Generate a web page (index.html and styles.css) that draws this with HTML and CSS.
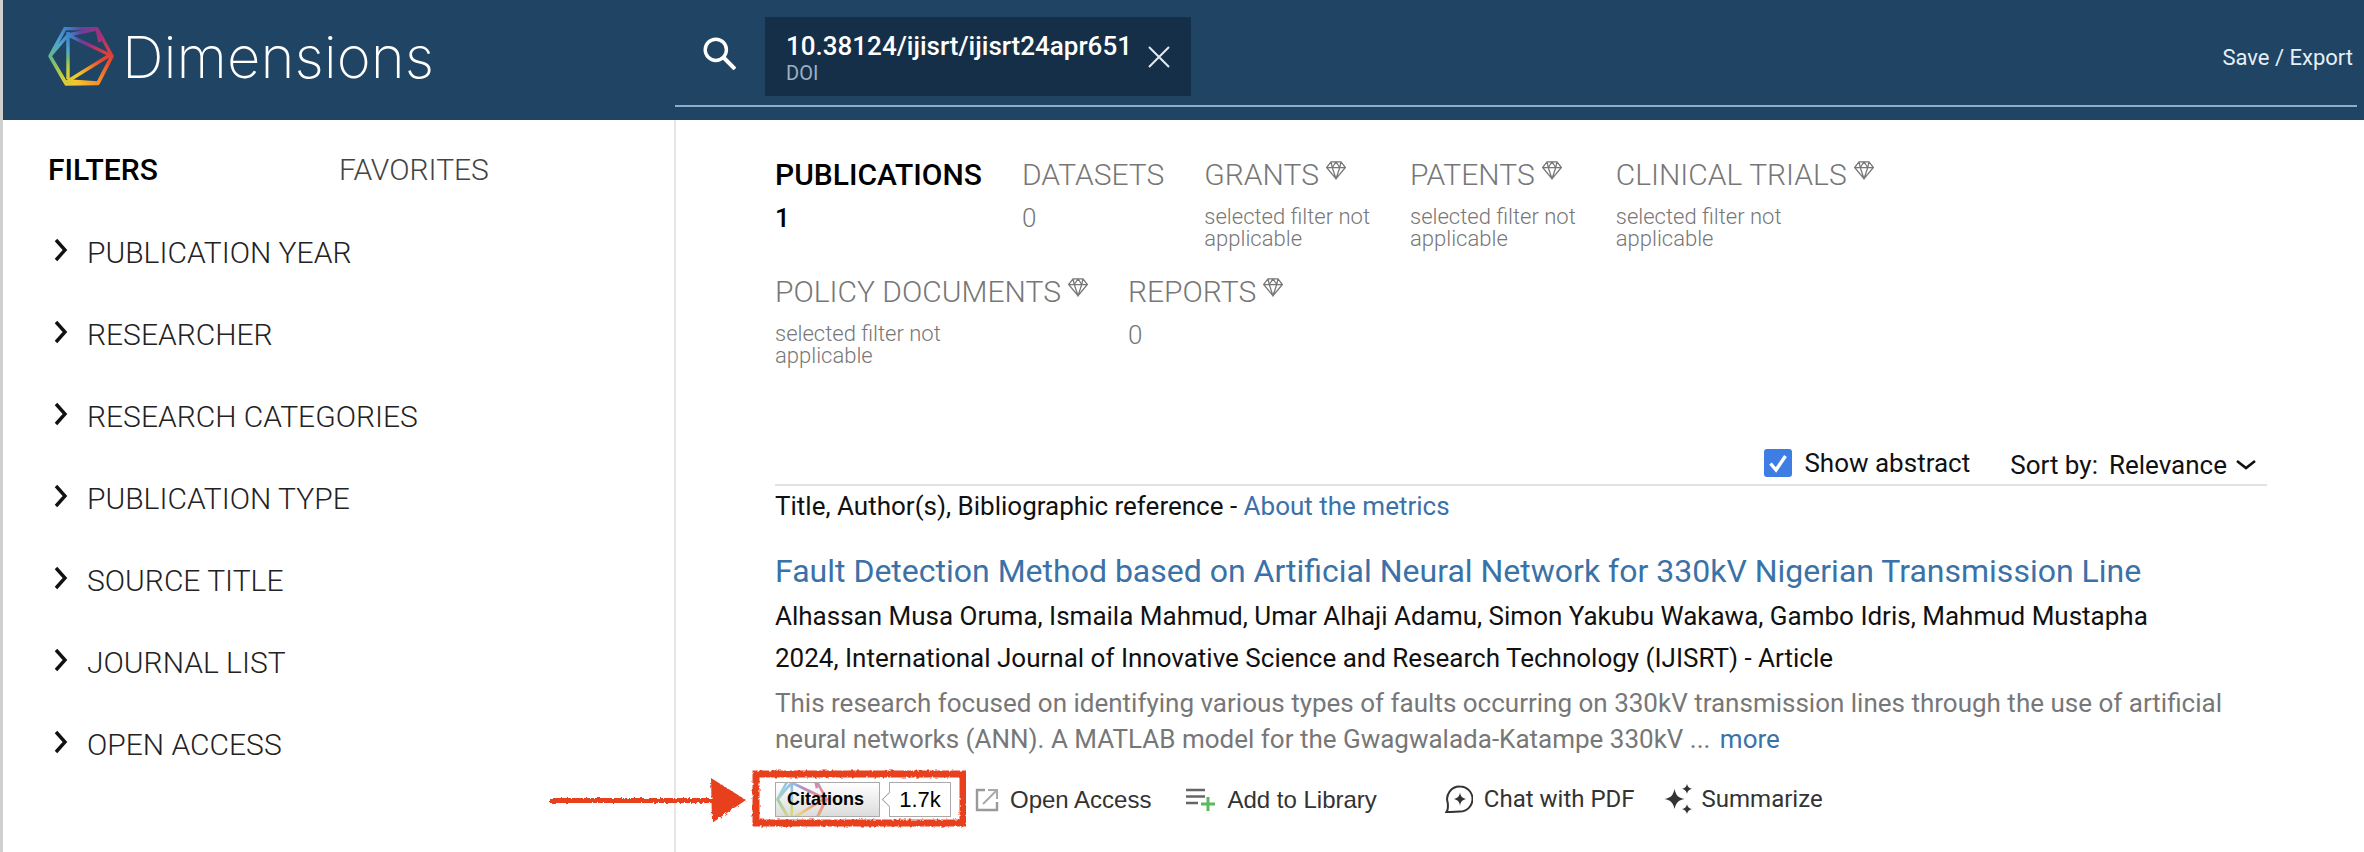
FILE: index.html
```html
<!DOCTYPE html>
<html lang="en">
<head>
    <meta charset="UTF-8">
    <title>Dimensions</title>
    <link rel="stylesheet" href="styles.css">
</head>
<body>
<svg class="defs" width="0" height="0">
    <defs>
        <mask id="logo-lines" maskUnits="userSpaceOnUse" x="0" y="0" width="66" height="60">
            <g fill="none" stroke="#fff" stroke-width="3.400" stroke-linejoin="round">
                <path d="M17 1.500L49 1.500L64 29L50 56.500L18 57L2 29Z"/>
                <path d="M49 2L20 8L62 28L20 54L50 56M20 5V52M2 29L20 8M2 29L18 56M49 2L52 15M64 29L50 56"/>
            </g>
        </mask>
    </defs>
</svg>

<header class="top-bar">
    <div class="brand">
        <svg class="logo" viewBox="0 0 66 60" width="66" height="60">
            <foreignObject x="0" y="0" width="66" height="60" mask="url(#logo-lines)">
                <div class="logo-fill"></div>
            </foreignObject>
        </svg>
        <span class="brand-name">Dimensions</span>
    </div>
    <div class="search-bar">
        <svg class="search-icon" viewBox="0 0 32 32" width="34" height="34">
            <circle cx="13" cy="13" r="10" fill="none" stroke="#fff" stroke-width="3.200"/>
            <path d="M20.500 20.500L31 31" stroke="#fff" stroke-width="3.800"/>
        </svg>
        <div class="search-chip">
            <div class="chip-text">
                <div class="chip-value">10.38124/ijisrt/ijisrt24apr651</div>
                <div class="chip-type">DOI</div>
            </div>
            <svg class="chip-close" viewBox="0 0 22 22" width="22" height="22">
                <path d="M1 1L21 21M21 1L1 21" stroke="#e4eaef" stroke-width="2"/>
            </svg>
        </div>
        <a class="save-link">Save / Export</a>
    </div>
</header>

<div class="page">
    <aside class="sidebar">
        <div class="side-tabs">
            <span class="side-tab active">FILTERS</span>
            <span class="side-tab">FAVORITES</span>
        </div>
        <ul class="filter-list">
            <li><svg class="chev" viewBox="0 0 14 24" width="14" height="24"><path d="M2 2L11 12L2 22"/></svg>PUBLICATION YEAR</li>
            <li><svg class="chev" viewBox="0 0 14 24" width="14" height="24"><path d="M2 2L11 12L2 22"/></svg>RESEARCHER</li>
            <li><svg class="chev" viewBox="0 0 14 24" width="14" height="24"><path d="M2 2L11 12L2 22"/></svg>RESEARCH CATEGORIES</li>
            <li><svg class="chev" viewBox="0 0 14 24" width="14" height="24"><path d="M2 2L11 12L2 22"/></svg>PUBLICATION TYPE</li>
            <li><svg class="chev" viewBox="0 0 14 24" width="14" height="24"><path d="M2 2L11 12L2 22"/></svg>SOURCE TITLE</li>
            <li><svg class="chev" viewBox="0 0 14 24" width="14" height="24"><path d="M2 2L11 12L2 22"/></svg>JOURNAL LIST</li>
            <li><svg class="chev" viewBox="0 0 14 24" width="14" height="24"><path d="M2 2L11 12L2 22"/></svg>OPEN ACCESS</li>
        </ul>
    </aside>

    <main class="content">
        <div class="tabs">
            <div class="tab active">
                <div class="tab-title">PUBLICATIONS</div>
                <div class="tab-count">1</div>
            </div>
            <div class="tab">
                <div class="tab-title">DATASETS</div>
                <div class="tab-count">0</div>
            </div>
            <div class="tab">
                <div class="tab-title">GRANTS<svg class="gem" viewBox="0 0 16 16" width="20" height="20"><path d="M4 1.500H12L15.500 6L8 15L.5 6ZM.5 6H15.500M5 6L8 15L11 6L8 1.500L5 6M4 1.500L5 6M12 1.500L11 6"/></svg></div>
                <div class="tab-note">selected filter not<br>applicable</div>
            </div>
            <div class="tab">
                <div class="tab-title">PATENTS<svg class="gem" viewBox="0 0 16 16" width="20" height="20"><path d="M4 1.500H12L15.500 6L8 15L.5 6ZM.5 6H15.500M5 6L8 15L11 6L8 1.500L5 6M4 1.500L5 6M12 1.500L11 6"/></svg></div>
                <div class="tab-note">selected filter not<br>applicable</div>
            </div>
            <div class="tab">
                <div class="tab-title">CLINICAL TRIALS<svg class="gem" viewBox="0 0 16 16" width="20" height="20"><path d="M4 1.500H12L15.500 6L8 15L.5 6ZM.5 6H15.500M5 6L8 15L11 6L8 1.500L5 6M4 1.500L5 6M12 1.500L11 6"/></svg></div>
                <div class="tab-note">selected filter not<br>applicable</div>
            </div>
            <div class="tab">
                <div class="tab-title">POLICY DOCUMENTS<svg class="gem" viewBox="0 0 16 16" width="20" height="20"><path d="M4 1.500H12L15.500 6L8 15L.5 6ZM.5 6H15.500M5 6L8 15L11 6L8 1.500L5 6M4 1.500L5 6M12 1.500L11 6"/></svg></div>
                <div class="tab-note">selected filter not<br>applicable</div>
            </div>
            <div class="tab">
                <div class="tab-title">REPORTS<svg class="gem" viewBox="0 0 16 16" width="20" height="20"><path d="M4 1.500H12L15.500 6L8 15L.5 6ZM.5 6H15.500M5 6L8 15L11 6L8 1.500L5 6M4 1.500L5 6M12 1.500L11 6"/></svg></div>
                <div class="tab-count">0</div>
            </div>
        </div>

        <div class="toolbar">
            <label class="show-abstract">
                <svg class="check" viewBox="0 0 28 28" width="28" height="28">
                    <rect width="28" height="28" rx="3" fill="#3d7de4"/>
                    <path d="M6.500 14.500L12 21L21.500 7" fill="none" stroke="#fff" stroke-width="3.400"/>
                </svg>
                Show abstract
            </label>
            <div class="sort">
                <span>Sort by:</span>
                <span class="sort-value">Relevance</span>
                <svg viewBox="0 0 22 12" width="22" height="12"><path d="M2 2L11 9L20 2" fill="none" stroke="#111" stroke-width="2.600"/></svg>
            </div>
        </div>

        <p class="legend">Title, Author(s), Bibliographic reference - <a>About the metrics</a></p>

        <article class="result">
            <h2 class="result-title">Fault Detection Method based on Artificial Neural Network for 330kV Nigerian Transmission Line</h2>
            <p class="result-line">Alhassan Musa Oruma, Ismaila Mahmud, Umar Alhaji Adamu, Simon Yakubu Wakawa, Gambo Idris, Mahmud Mustapha</p>
            <p class="result-line">2024, International Journal of Innovative Science and Research Technology (IJISRT) - Article</p>
            <p class="result-abstract">This research focused on identifying various types of faults occurring on 330kV transmission lines through the use of artificial<br>neural networks (ANN). A MATLAB model for the Gwagwalada-Katampe 330kV ... <a>more</a></p>

            <div class="actions">
                <div class="badge">
                    <div class="badge-label">
                        <svg class="badge-logo" viewBox="0 0 66 60" width="52" height="48">
                            <foreignObject x="0" y="0" width="66" height="60" mask="url(#logo-lines)">
                                <div class="logo-fill"></div>
                            </foreignObject>
                        </svg>
                        <span>Citations</span>
                    </div>
                    <div class="badge-count">1.7k</div>

                    <svg class="scribble" viewBox="0 0 420 64" width="420" height="64">
                        <defs>
                            <filter id="rough" x="-5%" y="-20%" width="110%" height="140%">
                                <feTurbulence type="fractalNoise" baseFrequency="0.35" numOctaves="2" seed="4"/>
                                <feDisplacementMap in="SourceGraphic" scale="3.500"/>
                            </filter>
                        </defs>
                        <g filter="url(#rough)">
                            <rect x="210" y="5" width="207" height="49" fill="none" stroke="#e8411f" stroke-width="7"/>
                            <path d="M4 29H168V34H4Z" fill="#e8411f"/>
                            <path d="M165 9L200 31L166 54Z" fill="#e8411f"/>
                        </g>
                    </svg>
                </div>

                <a class="action action-oa">
                    <svg viewBox="0 0 24 24" width="24" height="24" fill="none" stroke="#999" stroke-width="2.400">
                        <path d="M10 2H2V22H22V14"/>
                        <path d="M8 16L22 2M13 2H22V11" stroke="#aaa" stroke-width="2"/>
                    </svg>
                    Open Access
                </a>
                <a class="action action-lib">
                    <svg viewBox="0 0 30 26" width="30" height="26">
                        <path d="M0 3H19M0 9.500H19M0 16H12" stroke="#666" stroke-width="2.600"/>
                        <path d="M22 10V24M15 17H29" stroke="#5cb85c" stroke-width="3"/>
                    </svg>
                    Add to Library
                </a>
                <a class="action action-chat">
                    <svg viewBox="0 0 28 28" width="28" height="28">
                        <path d="M15 1.500A12.500 12.500 0 1 1 15 26.500C12 26.500 7 27 1.500 27C3.500 25 3 23 2.800 18A12.500 12.500 0 0 1 15 1.500Z" fill="none" stroke="#333" stroke-width="2"/>
                        <path d="M15 7.500C15.800 11.500 17 12.800 21 14C17 15.200 15.800 16.500 15 20.500C14.200 16.500 13 15.200 9 14C13 12.800 14.200 11.500 15 7.500Z" fill="#333"/>
                    </svg>
                    Chat with PDF
                </a>
                <a class="action action-sum">
                    <svg viewBox="0 0 30 30" width="30" height="30" fill="#333">
                        <path d="M10.500 5C12 11.500 14 13.500 20.500 15C14 16.500 12 18.500 10.500 25C9 18.500 7 16.500 .5 15C7 13.500 9 11.500 10.500 5Z"/>
                        <path d="M23 0C23.800 3 25 4 28 4.800C25 5.600 23.800 6.800 23 9.800C22.200 6.800 21 5.600 18 4.800C21 4 22.200 3 23 0Z"/>
                        <path d="M23 20.200C23.800 23.200 25 24.200 28 25C25 25.800 23.800 27 23 30C22.200 27 21 25.800 18 25C21 24.200 22.200 23.200 23 20.200Z"/>
                    </svg>
                    Summarize
                </a>
            </div>
        </article>
    </main>
</div>
</body>
</html>
```

FILE: styles.css
```css
* {
    margin: 0;
    padding: 0;
    box-sizing: border-box;
}
html, body {
    height: 852px;
    overflow: hidden;
}
body {
    background: #fff;
    border-left: 3px solid #cfcfcf;
    font-family: Roboto, "Liberation Sans", sans-serif;
    color: #111;
}
a {
    color: inherit;
    text-decoration: none;
}
.defs {
    position: absolute;
}

/* top bar */
.top-bar {
    height: 120px;
    background: #204464;
    display: flex;
    color: #fff;
}
.brand {
    width: 672px;
    padding: 27px 0 0 45px;
    display: flex;
    align-items: flex-start;
}
.logo {
    display: block;
}
.logo-fill {
    width: 66px;
    height: 60px;
    background: conic-gradient(from 0deg at 50% 50%, #6a3f9c 0deg, #a0307e 40deg, #e8452c 95deg, #f08a2a 140deg, #f5c52e 190deg, #c9cf3a 225deg, #6dbb78 265deg, #4fa6cf 300deg, #3f7fc8 335deg, #6a3f9c 360deg);
}
.brand-name {
    font-family: Inter, sans-serif;
    font-weight: 200;
    font-size: 58px;
    line-height: 60px;
    margin-left: 8px;
}
.search-bar {
    flex: 1;
    height: 107px;
    margin-right: 7px;
    border-bottom: 2px solid #8fadc4;
    display: flex;
    align-items: flex-start;
    padding-left: 27px;
}
.search-icon {
    margin-top: 36px;
}
.search-chip {
    width: 426px;
    height: 79px;
    margin: 17px 0 0 29px;
    padding: 0 21px;
    background: #152f48;
    display: flex;
    align-items: center;
    justify-content: space-between;
}
.chip-value {
    font-size: 26px;
    line-height: 30px;
    font-weight: 500;
}
.chip-type {
    font-size: 20px;
    line-height: 20px;
    color: #9fb0bf;
    margin-top: 2px;
}
.save-link {
    margin: 46px 4px 0 auto;
    font-size: 22px;
    line-height: 24px;
    color: #e6eff6;
}

/* left column */
.page {
    display: flex;
    height: 732px;
}
.sidebar {
    width: 673px;
    flex: none;
    border-right: 2px solid #e6e6e6;
    padding: 30px 0 0 45px;
}
.side-tabs {
    display: flex;
    height: 40px;
    line-height: 40px;
    font-size: 30px;
    margin-bottom: 21px;
}
.side-tab {
    width: 291px;
    font-weight: 300;
    color: #444;
}
.side-tab.active {
    font-weight: 500;
    color: #000;
}
.filter-list {
    list-style-type: none;
}
.filter-list li {
    height: 82px;
    display: flex;
    align-items: center;
    font-size: 30px;
    font-weight: 300;
    color: #222;
}
.chev {
    margin: -4px 19px 0 6px;
    fill: none;
    stroke: #111;
    stroke-width: 3.400;
}

/* main column */
.content {
    width: 1591px;
    padding: 35px 0 0 99px;
}
.tabs {
    width: 1200px;
    height: 285px;
    display: flex;
    flex-wrap: wrap;
    align-content: flex-start;
    gap: 22px 40px;
}
.tab-title {
    display: flex;
    font-size: 30px;
    line-height: 40px;
    font-weight: 300;
    color: #777;
    white-space: nowrap;
}
.tab.active .tab-title {
    font-weight: 500;
    color: #000;
}
.tab-count {
    margin-top: 8px;
    font-size: 26px;
    line-height: 30px;
    font-weight: 300;
    color: #777;
}
.tab.active .tab-count {
    font-weight: 500;
    color: #000;
}
.tab-note {
    margin-top: 11px;
    font-size: 22px;
    line-height: 22px;
    font-weight: 300;
    color: #777;
}
.gem {
    margin: 5px 0 0 7px;
    fill: none;
    stroke: #777;
    stroke-width: 1;
}
.toolbar {
    width: 1492px;
    height: 46px;
    padding-right: 10px;
    border-bottom: 2px solid #e2e2e2;
    display: flex;
    justify-content: flex-end;
    align-items: flex-start;
    font-size: 26px;
    line-height: 32px;
}
.show-abstract {
    display: flex;
    align-items: center;
    gap: 12px;
    margin: 7px 40px 0 0;
}
.sort {
    display: flex;
    align-items: center;
    gap: 11px;
    margin-top: 9px;
}
.sort svg {
    margin-left: -3px;
}
.legend {
    margin-top: 3px;
    font-size: 26px;
    line-height: 34px;
}
.legend a, .result-abstract a {
    color: #3a72a8;
}
.result {
    margin-top: 28px;
}
.result-title {
    font-size: 32px;
    line-height: 40px;
    font-weight: 400;
    color: #3a72a8;
}
.result-line {
    margin-top: 8px;
    font-size: 26px;
    line-height: 34px;
    color: #111;
}
.result-abstract {
    margin-top: 10px;
    font-size: 26px;
    line-height: 36px;
    color: #777;
}
.result-abstract a {
    margin-left: 3px;
}

/* actions row */
.actions {
    display: flex;
    align-items: center;
    margin-top: 20px;
    height: 44px;
    font-size: 24px;
    color: #333;
}
.action {
    display: flex;
    align-items: center;
    gap: 11px;
}
.badge {
    position: relative;
    display: flex;
    width: 200px;
    height: 35px;
    font-family: "Liberation Sans", sans-serif;
    color: #000;
}
.badge-label {
    position: relative;
    width: 105px;
    height: 35px;
    overflow: hidden;
    border: 1px solid #aaa;
    background: linear-gradient(#fff, #dcdcdc);
    font-size: 18px;
    font-weight: bold;
    line-height: 33px;
    text-align: center;
    padding-right: 4px;
}
.badge-label span {
    position: relative;
}
.badge-logo {
    position: absolute;
    left: 0;
    top: -7px;
    opacity: .55;
}
.badge-count {
    position: relative;
    width: 62px;
    height: 35px;
    margin-left: 9px;
    border: 1px solid #aaa;
    font-size: 22px;
    line-height: 33px;
    text-align: center;
}
.badge-count:before {
    content: "";
    position: absolute;
    left: -6px;
    top: 11px;
    width: 10px;
    height: 10px;
    background: #fff;
    border-left: 1px solid #aaa;
    border-bottom: 1px solid #aaa;
    transform: rotate(45deg);
}
.scribble {
    position: absolute;
    left: -229px;
    top: -13px;
}
.action-lib {
    margin-left: 35px;
}
.action-chat {
    margin-left: 68px;
}
.action-sum {
    margin-left: 29px;
    gap: 8px;
}
.action-oa, .action-lib {
    font-family: "Liberation Sans", sans-serif;
    padding-top: 2px;
}
```
